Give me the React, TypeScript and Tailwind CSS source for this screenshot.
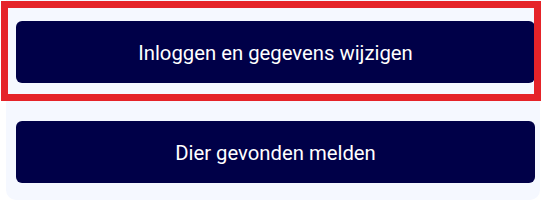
import React from "react";

export default function App() {
  const font = { fontFamily: "Roboto, 'Noto Sans', sans-serif" };
  return (
    <div className="relative w-[541px] h-[203px] bg-white" style={font}>
      <div className="ml-[6px] mr-[1px] h-[200px] rounded-b-[10px] bg-[#f5f8ff] flex flex-col">
        <div className="h-[100px] pt-[21px] pl-[10px] pr-[5px]">
          <button className="w-full h-[62px] pt-[3px] rounded-[6px] bg-[#000048] text-white text-[20.3px] leading-none">
            Inloggen en gegevens wijzigen
          </button>
        </div>
        <div className="h-[100px] pt-[21px] pl-[10px] pr-[5px]">
          <button className="w-full h-[62px] pt-[3px] rounded-[6px] bg-[#000048] text-white text-[20.3px] leading-none">
            Dier gevonden melden
          </button>
        </div>
      </div>
      <div className="absolute left-[1px] top-[1px] w-[540px] h-[100px] border-[7px] border-[#e52329] pointer-events-none" />
    </div>
  );
}
